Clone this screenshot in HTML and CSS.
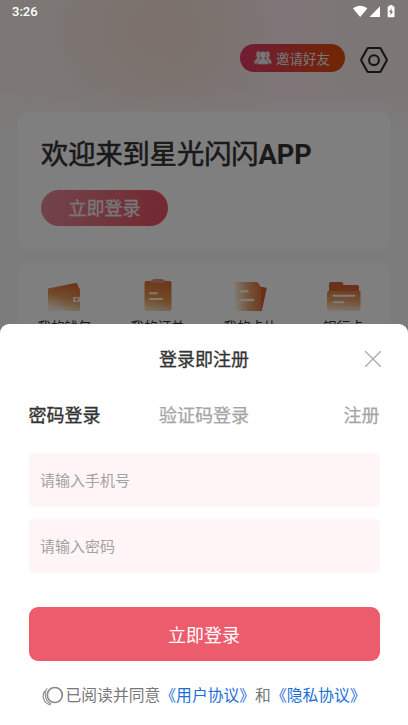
FILE: index.html
```html
<!DOCTYPE html>
<html lang="zh-CN">
<head>
<meta charset="utf-8">
<title>登录</title>
<link rel="stylesheet" href="styles.css">
</head>
<body>
<div class="screen">
  <main class="home">
    <div class="toolbar">
      <div class="invite">
        <svg width="18" height="14" viewBox="0 0 18 14" fill="#eee">
          <g opacity=".9"><ellipse cx="4.6" cy="3.6" rx="2.4" ry="3.4"/><path d="M0 12.500C.5 9.500 1.400 8.400 3.400 7V5h2.800v3L4.200 12.500z"/>
          <ellipse cx="13.400" cy="3.600" rx="2.400" ry="3.400"/><path d="M18 12.500c-.5-3-1.400-4.100-3.400-5.500V5h-2.800v3l2 4.500z"/></g>
          <path stroke="#d54059" stroke-width=".4" d="M9 .3c2.100 0 3.200 1.400 3.200 3.300 0 1.500-.6 2.700-1.400 3.400v.8c2.600 1 3.500 2.600 3.800 5.600H3.400c.3-3 1.200-4.600 3.800-5.600V7C6.400 6.300 5.800 5.100 5.800 3.600 5.800 1.700 6.900.3 9 .3z"/>
        </svg>
        <span>邀请好友</span>
      </div>
      <svg class="settings" width="28" height="28" viewBox="0 0 28 28" fill="none" stroke="#2b2b2b" stroke-width="2.100" stroke-linejoin="round">
        <path d="M8.300 2h11.400q.7 0 1.100.7l5.700 10.300q.5 1 0 2l-5.700 10.300q-.4.7-1.100.7H8.300q-.7 0-1.100-.7L1.500 15q-.5-1 0-2L7.200 2.700Q7.600 2 8.300 2z"/><circle cx="14" cy="14.200" r="4.900"/>
      </svg>
    </div>
    <section class="welcome">
      <h1>欢迎来到星光闪闪<b>APP</b></h1>
      <div class="welcome-login">立即登录</div>
    </section>
    <section class="menu">
      <div class="menu-item">
        <svg width="36" height="36" viewBox="0 0 36 36">
          <defs><linearGradient id="g1" x1=".8" y1="0" x2=".5" y2="1"><stop offset="0" stop-color="#e0642e"/><stop offset=".55" stop-color="#e39858"/><stop offset="1" stop-color="#fbebdc"/></linearGradient></defs>
          <path d="M1 9.500 28.500 4q1.500-.3 2 1l1 3.500q1.500.5 1.500 3V32H3q-2 0-2-2z" fill="url(#g1)"/>
          <path d="M26 18h7v5h-7z" fill="#ffe6db"/><path d="M28.500 19.500h2v2h-2z" fill="#d96038"/>
        </svg>
        <span>我的钱包</span>
      </div>
      <div class="menu-item">
        <svg width="36" height="36" viewBox="0 0 36 36">
          <defs><linearGradient id="g2" x1=".6" y1="0" x2=".4" y2="1"><stop offset="0" stop-color="#dd6c34"/><stop offset=".6" stop-color="#e59650"/><stop offset="1" stop-color="#f6d9bd"/></linearGradient></defs>
          <rect x="4.500" y="2" width="27" height="30" rx="2" fill="url(#g2)"/>
          <path d="M10 4q1-3.500 4-4h8q3 .5 4 4z" fill="#df8e78"/>
          <path d="M10 14.300h7M10 20h12" stroke="#fff4ea" stroke-width="2" stroke-linecap="round"/>
        </svg>
        <span>我的订单</span>
      </div>
      <div class="menu-item">
        <svg width="36" height="36" viewBox="0 0 36 36">
          <defs><linearGradient id="g3" x1="0" y1=".6" x2="1" y2=".5"><stop offset="0" stop-color="#fff6ec"/><stop offset=".5" stop-color="#e8a973"/><stop offset="1" stop-color="#dd7440"/></linearGradient></defs>
          <path d="m23 7 9.500 1.500q1.500.5 1 2L29 31q-.5 1.500-2 1h-10z" fill="#d05f2e"/>
          <path d="M3 3h20q2 0 2.700 1.500L28.500 10v20q0 2-2 2H2V4q0-1 1-1z" fill="url(#g3)"/>
          <path d="M7.500 12.300h7M7.500 21h12.500" stroke="#fff8ed" stroke-width="2.500" stroke-linecap="round"/>
        </svg>
        <span>我的卡片</span>
      </div>
      <div class="menu-item">
        <svg width="36" height="36" viewBox="0 0 36 36">
          <defs><linearGradient id="g4" x1=".5" y1="0" x2=".4" y2="1"><stop offset="0" stop-color="#e07e48"/><stop offset=".5" stop-color="#e7a46c"/><stop offset="1" stop-color="#fdeadb"/></linearGradient></defs>
          <path d="M3 5q0-2 2-2h10q2 0 2.500 3H31q2 0 2 2v6H3z" fill="#d66432"/>
          <path d="M2 12h32.500v18q0 2-2 2H3q-2 0-2-2V14z" fill="url(#g4)"/>
          <path d="M7.500 16.800h21M7.500 23.300h10" stroke="#fff7ec" stroke-width="2" stroke-linecap="round"/>
        </svg>
        <span>银行卡</span>
      </div>
    </section>
  </main>
  <div class="mask"></div>
  <header class="status">
    <span>3:26</span>
    <svg width="43" height="14" viewBox="0 0 43 14" fill="#fff">
      <path d="M0 3.400C4-.2 10.300-.2 14.300 3.400L7.200 12z"/>
      <path d="M27 1.200V12H16.500z"/>
      <path d="M36.500 0h3v1.300h1.200q.8 0 .8.8v9.300q0 .8-.8.8h-5.200q-.8 0-.8-.8V2.100q0-.8.8-.8h1z"/>
      <path d="M38.800 3.200 36 7.300h1.700l-.4 3.200L40 6.300h-1.600z" fill="#746d6d"/>
    </svg>
  </header>
  <section class="sheet">
    <div class="sheet-head">
      <h2>登录即注册</h2>
      <svg class="close" width="18" height="18" viewBox="0 0 18 18" fill="none" stroke="#aaa" stroke-width="1.300"><path d="M1.200 1.200 16.800 16.800M16.800 1.200 1.200 16.800"/></svg>
    </div>
    <nav class="tabs">
      <span class="tab active">密码登录</span><span class="tab">验证码登录</span><span class="tab">注册</span>
    </nav>
    <input class="field" type="text" placeholder="请输入手机号">
    <input class="field" type="password" placeholder="请输入密码">
    <button class="submit">立即登录</button>
    <div class="agree">
      <svg width="22" height="20" viewBox="0 0 22 20" fill="none" stroke="#8b8b8b"><circle cx="12.800" cy="9" r="7.500" stroke-width="1.700"/><path d="M5.300 2.300C1.800 6 2.500 14.800 9.300 18.200" stroke-width="1.100"/><path d="M3 5C-.8 9.500 1.600 17.500 8.400 18.800" stroke-width="1.200"/></svg>
      <span>已阅读并同意</span><a>《用户协议》</a><span>和</span><a>《隐私协议》</a>
    </div>
  </section>
</div>
</body>
</html>
```
FILE: styles.css
```css
* { box-sizing: border-box; margin: 0; padding: 0; }
body { font-family: Roboto, "Noto Sans CJK SC", sans-serif; color: #333; }
.screen { position: relative; width: 408px; height: 725px; overflow: hidden; background: #f8f8f8; }
.home {
  height: 725px;
  padding: 44px 18px 0;
  background:
    radial-gradient(ellipse 120px 85px at 160px 30px, rgba(250, 200, 165, .28), transparent),
    linear-gradient(rgba(248, 248, 248, 0) 90px, #f8f8f8 135px),
    linear-gradient(90deg, #faf1ee, #f8ebe6 45%, #fcecf0 70%, #faecee);
}
.toolbar { display: flex; justify-content: flex-end; align-items: flex-start; height: 68px; gap: 15px; }
.invite {
  display: flex; align-items: center; gap: 4px; width: 105px; height: 28px; padding-left: 14px;
  border-radius: 14px; background: linear-gradient(90deg, #e23a6c, #e2452a 65%, #e04c08);
  color: #eee; font-size: 13.500px; line-height: 28px; white-space: nowrap;
}
.invite span { margin-top: 1px; }
.settings { margin: 2px 2px 0 0; }
.welcome { height: 137px; padding: 23px 23px 0; border-radius: 9px; background: #fff; }
.welcome h1 { font-size: 27.200px; line-height: 40px; font-weight: 400; color: #333; -webkit-text-stroke: .6px #333; white-space: nowrap; }
.welcome h1 b { font-weight: 700; -webkit-text-stroke: 0; }
.welcome-login {
  width: 127px; height: 36px; margin-top: 15px; border-radius: 18px;
  background: linear-gradient(100deg, #e58492 10%, #e65566 90%);
  color: #eee; font-size: 18px; line-height: 38px; text-align: center; -webkit-text-stroke: .3px #eee;
}
.menu { display: grid; grid-template-columns: repeat(4, 1fr); height: 120px; margin-top: 14px; padding-top: 16px; border-radius: 9px; background: #fff; }
.menu-item { display: flex; flex-direction: column; align-items: center; gap: 1px; font-size: 13.500px; line-height: 20px; }
.menu-item span { margin-top: 1px; }
.mask { position: absolute; inset: 0; background: rgba(0, 0, 0, .5); }
.status {
  position: absolute; inset: 0 0 auto; display: flex; justify-content: space-between; align-items: flex-start;
  padding: 5px 12px 0; color: #fff; font-size: 13px; font-weight: 500; line-height: 14px;
}
.sheet { position: absolute; inset: 324px 0 0; padding: 0 28.500px; border-radius: 9px 9px 0 0; background: #fff; }
.sheet-head { position: relative; display: flex; justify-content: center; align-items: center; height: 70px; }
.sheet-head h2 { margin-top: 2px; font-size: 18px; line-height: 26px; font-weight: 400; -webkit-text-stroke: .3px #333; }
.close { position: absolute; right: -2px; top: 26px; }
.tabs { display: flex; justify-content: space-between; height: 59px; padding-top: 9px; font-size: 18px; line-height: 26px; }
.tab { color: #a5a5a5; -webkit-text-stroke: .25px #a5a5a5; }
.tab.active { color: #333; -webkit-text-stroke: .35px #333; }
.tab:nth-child(2) { margin-left: -27px; margin-right: 9px; }
.field {
  display: block; width: 100%; height: 54px; margin-bottom: 12px; padding: 0 12px 2px 11.500px; border: 0; outline: 0;
  border-radius: 5px; background: #fff5f6; font: 15px "Noto Sans CJK SC", sans-serif;
}
.field::placeholder { color: #a2a2a2; }
.submit {
  display: block; width: 100%; height: 54px; margin-top: 34px; border: 0; border-radius: 9px; background: #ec5c6c;
  color: #fff; font: 18px "Noto Sans CJK SC", sans-serif;
}
.agree { display: flex; align-items: center; margin: 23px 0 0 13px; font-size: 15.800px; line-height: 24px; color: #777; white-space: nowrap; }
.agree svg { margin-right: 2px; }
.agree a { color: #1a6fd8; }
```
